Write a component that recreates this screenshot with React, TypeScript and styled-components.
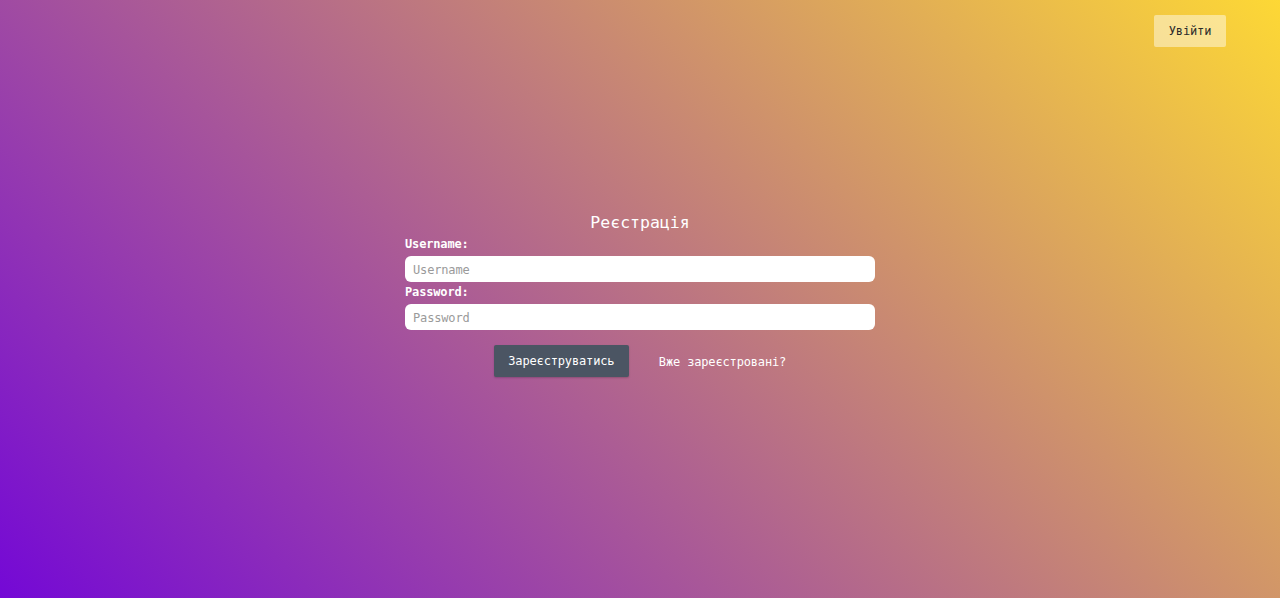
import React from "react";
import styled, { createGlobalStyle } from "styled-components";

const GlobalStyle = createGlobalStyle`
  html, body { margin: 0; padding: 0; }
  body {
    font-family: "DejaVu Sans Mono", "Liberation Mono", monospace;
  }
  * { box-sizing: border-box; }
`;

const Page = styled.div`
  min-height: 100vh;
  display: flex;
  flex-direction: column;
  background: linear-gradient(45deg, #7408d6 0%, #fdd835 100%);
  font-family: "DejaVu Sans Mono", "Liberation Mono", monospace;
`;

const Header = styled.header`
  display: flex;
  justify-content: flex-end;
  padding: 15px 54px 15px 0;
`;

const LoginButton = styled.button`
  width: 72px;
  height: 32px;
  padding-top: 1px;
  border: none;
  border-radius: 2px;
  background: rgba(255, 255, 255, 0.45);
  color: #2b2b2b;
  font-family: inherit;
  font-size: 12px;
  letter-spacing: -0.15px;
  cursor: pointer;
`;

const Main = styled.main`
  flex: 1;
  display: flex;
  justify-content: center;
  padding-top: 149px;
`;

const Form = styled.form`
  width: 470px;
  display: flex;
  flex-direction: column;
`;

const Title = styled.h1`
  margin: 0;
  text-align: center;
  color: #ffffff;
  font-size: 16.5px;
  font-weight: normal;
  line-height: 23px;
`;

const Label = styled.label`
  color: #ffffff;
  font-weight: bold;
  font-size: 12px;
  letter-spacing: -0.15px;
  line-height: 18px;
  margin-top: 1px;
  margin-bottom: -1px;
`;

const Input = styled.input`
  margin-top: 4px;
  height: 26px;
  border: none;
  border-radius: 6px;
  background: #ffffff;
  padding: 1px 8px 0;
  font-family: inherit;
  font-size: 12px;
  letter-spacing: -0.15px;
  color: #333;
  outline: none;
  &::placeholder {
    color: #9a9a9a;
  }
`;

const Actions = styled.div`
  display: flex;
  justify-content: center;
  align-items: center;
  gap: 30px;
  margin-top: 15px;
`;

const SubmitButton = styled.button`
  width: 135px;
  height: 32px;
  padding-top: 1px;
  border: none;
  border-radius: 2px;
  background: #4b5563;
  color: #ffffff;
  font-family: inherit;
  font-size: 12px;
  letter-spacing: -0.15px;
  box-shadow: 0 1px 2px rgba(0, 0, 0, 0.2);
  cursor: pointer;
`;

const LinkText = styled.a`
  color: #ffffff;
  font-size: 12px;
  letter-spacing: -0.15px;
  text-decoration: none;
  padding-top: 1px;
  cursor: pointer;
`;

export default function App() {
  return (
    <>
      <GlobalStyle />
      <Page>
        <Header>
          <LoginButton>Увійти</LoginButton>
        </Header>
        <Main>
          <Form onSubmit={(e) => e.preventDefault()}>
            <Title>Реєстрація</Title>
            <Label htmlFor="username">Username:</Label>
            <Input id="username" placeholder="Username" />
            <Label htmlFor="password">Password:</Label>
            <Input id="password" type="password" placeholder="Password" />
            <Actions>
              <SubmitButton type="submit">Зареєструватись</SubmitButton>
              <LinkText>Вже зареєстровані?</LinkText>
            </Actions>
          </Form>
        </Main>
      </Page>
    </>
  );
}
